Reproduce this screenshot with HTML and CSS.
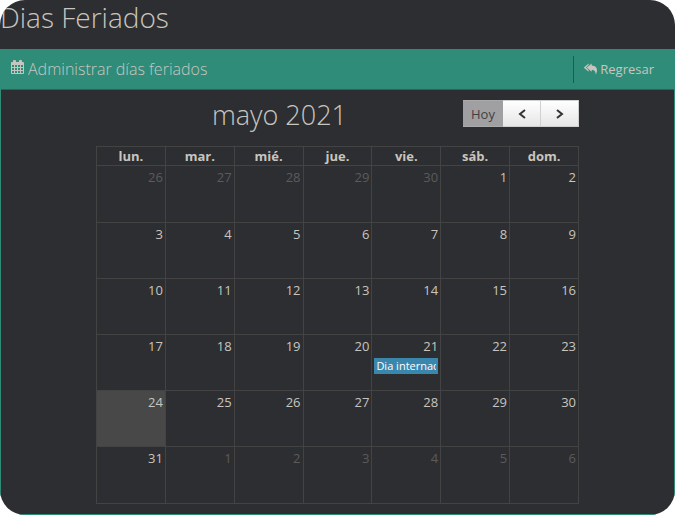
FILE: index.html
```html
<!DOCTYPE html>
<html lang="es">
<head>
<meta charset="utf-8">
<title>Dias Feriados</title>
<link rel="stylesheet" href="styles.css">
</head>
<body>
<main class="page">
  <h1 class="page-title">Dias Feriados</h1>
  <section class="portlet">
    <header class="portlet-header">
      <h2 class="caption">
        <svg class="icon-calendar" viewBox="0 0 13 14" aria-hidden="true"><path fill-rule="evenodd" d="M1 2h1V1q0-1 1-1h1q1 0 1 1v1h3V1q0-1 1-1h1q1 0 1 1v1h1q1 0 1 1v10q0 1-1 1H1q-1 0-1-1V3q0-1 1-1zM1 5v2h2V5zm3 0v2h2V5zm3 0v2h2V5zm3 0v2h2V5zM1 8v2h2V8zm3 0v2h2V8zm3 0v2h2V8zm3 0v2h2V8zM1 11v2h2v-2zm3 0v2h2v-2zm3 0v2h2v-2zm3 0v2h2v-2z"/></svg>
        Administrar días feriados
      </h2>
      <a class="back" href="#">
        <svg class="icon-reply" viewBox="0 0 14 12" aria-hidden="true"><path d="M5 0v1.800L2.200 4.500 5 7.300V9L.2 5q-.4-.5 0-1z"/><path d="M8.300 0v2.200C12.500 2.400 14 4.500 14 7.500c0 1.800-.8 3.200-1.500 4.500.2-3-.8-4.900-4.200-5V9L3.400 5q-.4-.5 0-1z"/></svg>
        Regresar
      </a>
    </header>
    <div class="portlet-body">
      <div class="calendar">
        <div class="toolbar">
          <h2 class="month">mayo 2021</h2>
          <div class="buttons">
            <button type="button" class="btn btn-today" disabled>Hoy</button>
            <button type="button" class="btn btn-prev" aria-label="Anterior"><svg class="chevron" viewBox="0 0 8 10" aria-hidden="true"><path d="M7 1L2 5l5 4"/></svg></button>
            <button type="button" class="btn btn-next" aria-label="Siguiente"><svg class="chevron" viewBox="0 0 8 10" aria-hidden="true"><path d="M1 1l5 4-5 4"/></svg></button>
          </div>
        </div>
        <table class="month-grid">
          <thead>
            <tr><th>lun.</th><th>mar.</th><th>mié.</th><th>jue.</th><th>vie.</th><th>sáb.</th><th>dom.</th></tr>
          </thead>
          <tbody>
            <tr><td class="other">26</td><td class="other">27</td><td class="other">28</td><td class="other">29</td><td class="other">30</td><td>1</td><td>2</td></tr>
            <tr><td>3</td><td>4</td><td>5</td><td>6</td><td>7</td><td>8</td><td>9</td></tr>
            <tr><td>10</td><td>11</td><td>12</td><td>13</td><td>14</td><td>15</td><td>16</td></tr>
            <tr><td>17</td><td>18</td><td>19</td><td>20</td><td>21<a class="event" href="#"><span class="event-title">Dia internac</span></a></td><td>22</td><td>23</td></tr>
            <tr><td class="today">24</td><td>25</td><td>26</td><td>27</td><td>28</td><td>29</td><td>30</td></tr>
            <tr><td>31</td><td class="other">1</td><td class="other">2</td><td class="other">3</td><td class="other">4</td><td class="other">5</td><td class="other">6</td></tr>
          </tbody>
        </table>
      </div>
    </div>
  </section>
</main>
</body>
</html>
```
FILE: styles.css
```css
* {
  box-sizing: border-box;
}

body {
  margin: 0;
  background: #fff;
  color: #c8c5bf;
  font-family: "Open Sans", sans-serif;
  font-size: 13px;
}

h1,
h2 {
  margin: 0;
  font-weight: 300;
}

.page {
  display: flex;
  flex-direction: column;
  min-height: 100vh;
  overflow: hidden;
  border-radius: 25px;
  background: #2d2e32;
}

.page-title {
  padding-bottom: 15px;
  font-size: 28px;
  line-height: 34px;
}

.portlet {
  flex: 1;
  border: 1px solid #2f8c79;
  border-top: 0;
}

.portlet-header {
  display: flex;
  align-items: center;
  justify-content: space-between;
  height: 41px;
  padding: 0 20px 0 10px;
  border-bottom: 1px solid #485653;
  background: #2f8c79;
}

.caption {
  display: flex;
  align-items: center;
  gap: 4px;
  font-size: 16px;
  line-height: 24px;
}

.icon-calendar {
  width: 13px;
  height: 14px;
  margin-bottom: 4px;
  fill: currentColor;
}

.back {
  display: flex;
  align-items: center;
  gap: 3px;
  padding-left: 10px;
  border-left: 1px solid #484848;
  color: inherit;
  line-height: 27px;
  text-decoration: none;
}

.icon-reply {
  width: 13px;
  height: 12px;
  fill: currentColor;
}

.portlet-body {
  padding: 10px;
}

.calendar {
  max-width: 483px;
  margin: 0 auto;
}

.toolbar {
  display: flex;
  margin-bottom: 16px;
}

.month {
  flex: 1;
  font-size: 27px;
  line-height: 30px;
  text-align: center;
}

.buttons {
  display: flex;
  height: 27px;
}

.btn {
  width: 38px;
  padding: 0;
  border: 1px solid #d0d0d0;
  border-left-width: 0;
  background: linear-gradient(#fff, #e6e6e6);
  color: #333;
  font: inherit;
}

.btn-today {
  width: 40px;
  border-color: #aaa;
  border-right-width: 0;
  background: #a0a0a2;
  color: #3f4042;
}

.chevron {
  width: 8px;
  height: 10px;
  fill: none;
  stroke: #333;
  stroke-width: 2;
}

.month-grid {
  width: 100%;
  table-layout: fixed;
  border-collapse: collapse;
}

th,
td {
  border: 1px solid #434343;
}

th {
  height: 19px;
  padding: 0;
  line-height: 18px;
}

td {
  height: 56px;
  padding: 2px 2px 0;
  line-height: 18px;
  text-align: right;
  vertical-align: top;
}

tbody tr:first-child td,
tbody tr:last-child td {
  height: 57px;
}

.other {
  color: #5b5b5c;
}

.today {
  background: #484848;
}

.event {
  display: block;
  margin-top: 3px;
  padding: 0 2px;
  background: #3a87ad;
  color: #fff;
  font-size: 11px;
  line-height: 16px;
  text-align: left;
  text-decoration: none;
}

.event-title {
  display: block;
  overflow: hidden;
  white-space: nowrap;
}
```
